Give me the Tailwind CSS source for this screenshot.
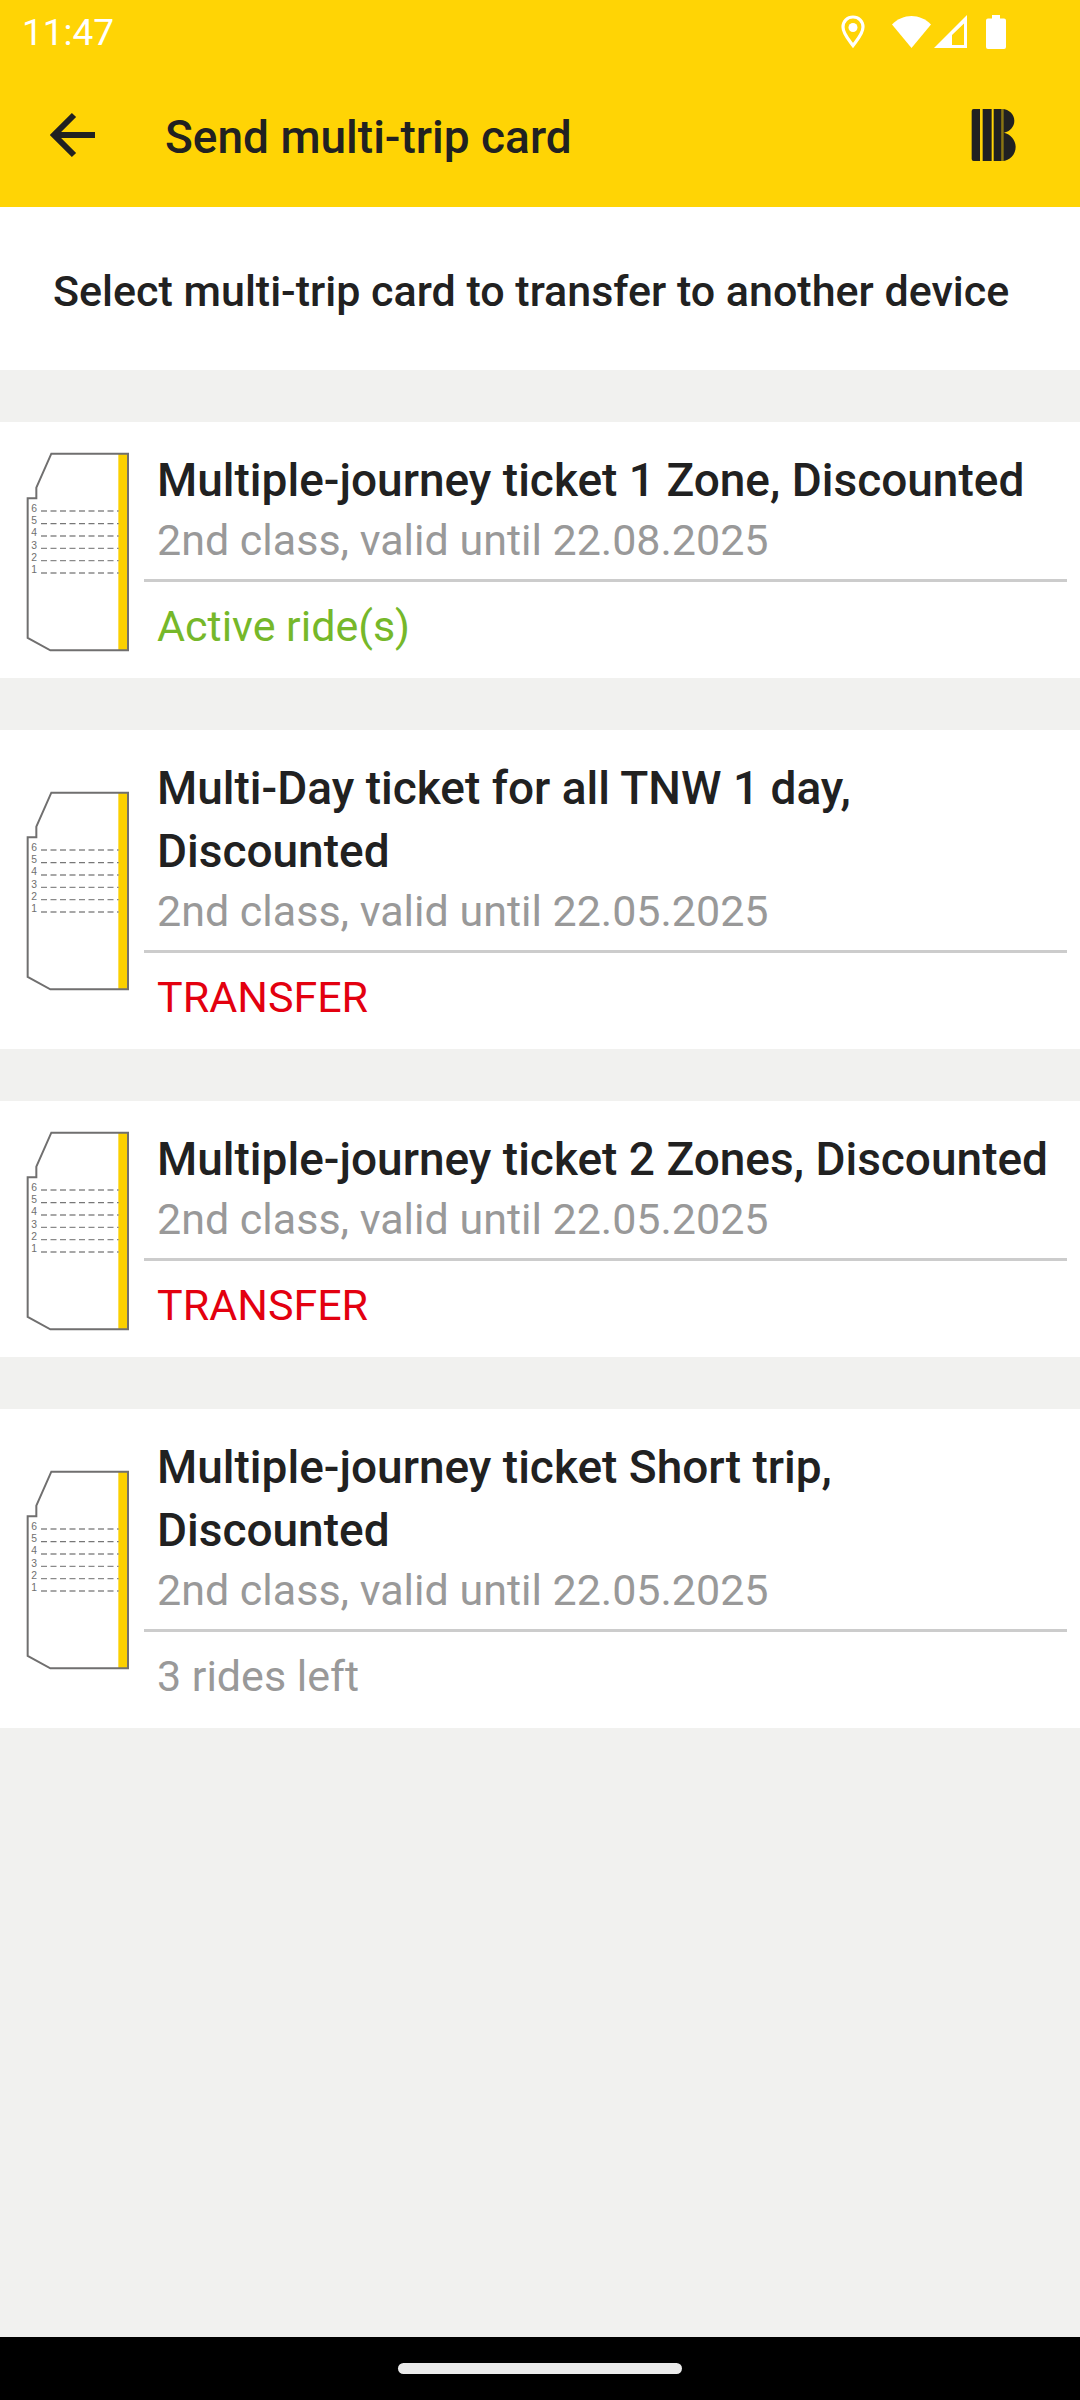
<!DOCTYPE html>
<html lang="en">
  <head>
    <meta charset="UTF-8" />
    <meta name="viewport" content="width=device-width, initial-scale=1.0" />
    <title>Send multi-trip card</title>
    <script src="https://cdn.jsdelivr.net/npm/@tailwindcss/browser@4"></script>
  </head>
  <body class="flex min-h-screen flex-col bg-[#f1f1ef] font-[Roboto,sans-serif] text-[#212121]">
    <!-- Ticket drawing shared by all cards -->
    <svg class="hidden" aria-hidden="true">
      <symbol id="ticket" viewBox="78 95 312 600">
        <path d="M355 101H384V690H355Z" fill="#fbd000" />
        <path d="M154 100H384V690H151L83 653V234H109V202Z" fill="none" stroke="#706f6f" stroke-width="6" />
        <g stroke="#8a8a8a" stroke-width="4" stroke-dasharray="18 10.5">
          <path d="M123 272H356" />
          <path d="M123 310H356" stroke="#777" />
          <path d="M123 347H356" />
          <path d="M123 384H356" />
          <path d="M123 421H356" />
          <path d="M123 458H356" />
        </g>
        <g fill="#706f6f" font-family="Liberation Sans, sans-serif" font-size="31">
          <text x="94" y="274">6</text>
          <text x="94" y="311">5</text>
          <text x="94" y="348">4</text>
          <text x="94" y="385">3</text>
          <text x="94" y="422">2</text>
          <text x="94" y="459">1</text>
        </g>
      </symbol>
    </svg>

    <header class="bg-[#ffd405]">
      <!-- Status bar -->
      <div class="flex h-[63px] items-center justify-between pr-[74px] pl-[22px] text-white">
        <span class="pt-[3px] text-[37px] leading-[44px]">11:47</span>
        <div class="flex items-center">
          <svg class="mr-[27px] h-[34px] w-[24px]" viewBox="0 0 24 34" fill="none">
            <path d="M12 2C6.300 2 2 6.300 2 12C2 19 8.500 25.500 12 30.500C15.500 25.500 22 19 22 12C22 6.300 17.700 2 12 2Z" stroke="currentColor" stroke-width="3.200" />
            <circle cx="12" cy="12.500" r="4.500" fill="currentColor" />
          </svg>
          <svg class="mr-[3px] h-[34px] w-[39px]" viewBox="0 0 39 34" fill="currentColor">
            <path d="M0 9.500C11 -2 28 -2 39 9.500L19.500 33Z" />
          </svg>
          <svg class="mr-[19px] h-[34px] w-[33px]" viewBox="0 0 33 34" fill="currentColor">
            <path fill-rule="evenodd" d="M0 33L33 0V33ZM18 20V30H30V8.500Z" />
          </svg>
          <svg class="h-[34px] w-[20px]" viewBox="0 0 20 34" fill="currentColor">
            <path d="M6 0H14V3.500H18Q20 3.500 20 5.500V32Q20 34 18 34H2Q0 34 0 32V5.500Q0 3.500 2 3.500H6Z" />
          </svg>
        </div>
      </div>

      <!-- Toolbar -->
      <div class="flex h-[144px] items-center pr-[64px] pl-[48px]">
        <button type="button" aria-label="Back" class="mr-[69px] cursor-pointer">
          <svg class="h-[48px] w-[48px]" viewBox="0 0 48 48" fill="none" stroke="currentColor" stroke-width="6">
            <path d="M47 24H6M26 4L6 24L26 44" />
          </svg>
        </button>
        <h1 class="flex-1 pt-1 text-[46px] leading-[63px] font-medium">Send multi-trip card</h1>
        <svg class="h-[52px] w-[45px]" viewBox="0 0 135 156" fill="#212121" role="img" aria-label="Logo">
          <path d="M94 0C114 1 130 16 130 35C130 53 117 67 99 71C118 75 134 93 134 113C134 137 116 155 94 156Z" />
          <path d="M8 0H27V156H8Q2 156 2 150V6Q2 0 8 0Z" />
          <path d="M35 0H62V156H35Z" />
          <path d="M68 0H92V156H68Z" />
          <path d="M92 0H98V156H92Z" fill="#8a7512" />
        </svg>
      </div>
    </header>

    <main class="flex flex-1 flex-col gap-[52px]">
      <p class="bg-white px-[53px] pt-[56px] pb-[51px] text-[43px] leading-[56px] font-medium">
        Select multi-trip card to transfer to another device
      </p>

      <article class="flex items-center bg-white pr-[13px] pl-[26px]">
        <svg class="mt-[3px] h-[200px] w-[104px] shrink-0" aria-hidden="true"><use href="#ticket" /></svg>
        <div class="ml-[14px] flex-1 pt-[27px] pb-[24px]">
          <h2 class="pl-[13px] text-[46px] leading-[63px] font-medium">Multiple-journey ticket 1 Zone, Discounted</h2>
          <p class="pl-[13px] text-[43px] leading-[56px] text-[#999]">2nd class, valid until 22.08.2025</p>
          <hr class="mt-[11px] mb-[16px] border-t-[3px] border-[#ccc]" />
          <p class="pl-[13px] text-[43px] leading-[56px] text-[#76b82a]">Active ride(s)</p>
        </div>
      </article>

      <article class="flex items-center bg-white pr-[13px] pl-[26px]">
        <svg class="mt-[3px] h-[200px] w-[104px] shrink-0" aria-hidden="true"><use href="#ticket" /></svg>
        <div class="ml-[14px] flex-1 pt-[27px] pb-[24px]">
          <h2 class="pl-[13px] text-[46px] leading-[63px] font-medium">Multi-Day ticket for all TNW 1 day, <br />Discounted</h2>
          <p class="pl-[13px] text-[43px] leading-[56px] text-[#999]">2nd class, valid until 22.05.2025</p>
          <hr class="mt-[11px] mb-[16px] border-t-[3px] border-[#ccc]" />
          <button type="button" class="block cursor-pointer pl-[13px] text-[43px] leading-[56px] text-[#e3000f]">TRANSFER</button>
        </div>
      </article>

      <article class="flex items-center bg-white pr-[13px] pl-[26px]">
        <svg class="mt-[3px] h-[200px] w-[104px] shrink-0" aria-hidden="true"><use href="#ticket" /></svg>
        <div class="ml-[14px] flex-1 pt-[27px] pb-[24px]">
          <h2 class="pl-[13px] text-[46px] leading-[63px] font-medium">Multiple-journey ticket 2 Zones, Discounted</h2>
          <p class="pl-[13px] text-[43px] leading-[56px] text-[#999]">2nd class, valid until 22.05.2025</p>
          <hr class="mt-[11px] mb-[16px] border-t-[3px] border-[#ccc]" />
          <button type="button" class="block cursor-pointer pl-[13px] text-[43px] leading-[56px] text-[#e3000f]">TRANSFER</button>
        </div>
      </article>

      <article class="flex items-center bg-white pr-[13px] pl-[26px]">
        <svg class="mt-[3px] h-[200px] w-[104px] shrink-0" aria-hidden="true"><use href="#ticket" /></svg>
        <div class="ml-[14px] flex-1 pt-[27px] pb-[24px]">
          <h2 class="pl-[13px] text-[46px] leading-[63px] font-medium">Multiple-journey ticket Short trip, <br />Discounted</h2>
          <p class="pl-[13px] text-[43px] leading-[56px] text-[#999]">2nd class, valid until 22.05.2025</p>
          <hr class="mt-[11px] mb-[16px] border-t-[3px] border-[#ccc]" />
          <p class="pl-[13px] text-[43px] leading-[56px] text-[#999]">3 rides left</p>
        </div>
      </article>
    </main>

    <!-- Gesture bar -->
    <footer class="flex h-[63px] items-center justify-center bg-black">
      <div class="h-[11px] w-[284px] rounded-full bg-[#ebebeb]"></div>
    </footer>
  </body>
</html>
